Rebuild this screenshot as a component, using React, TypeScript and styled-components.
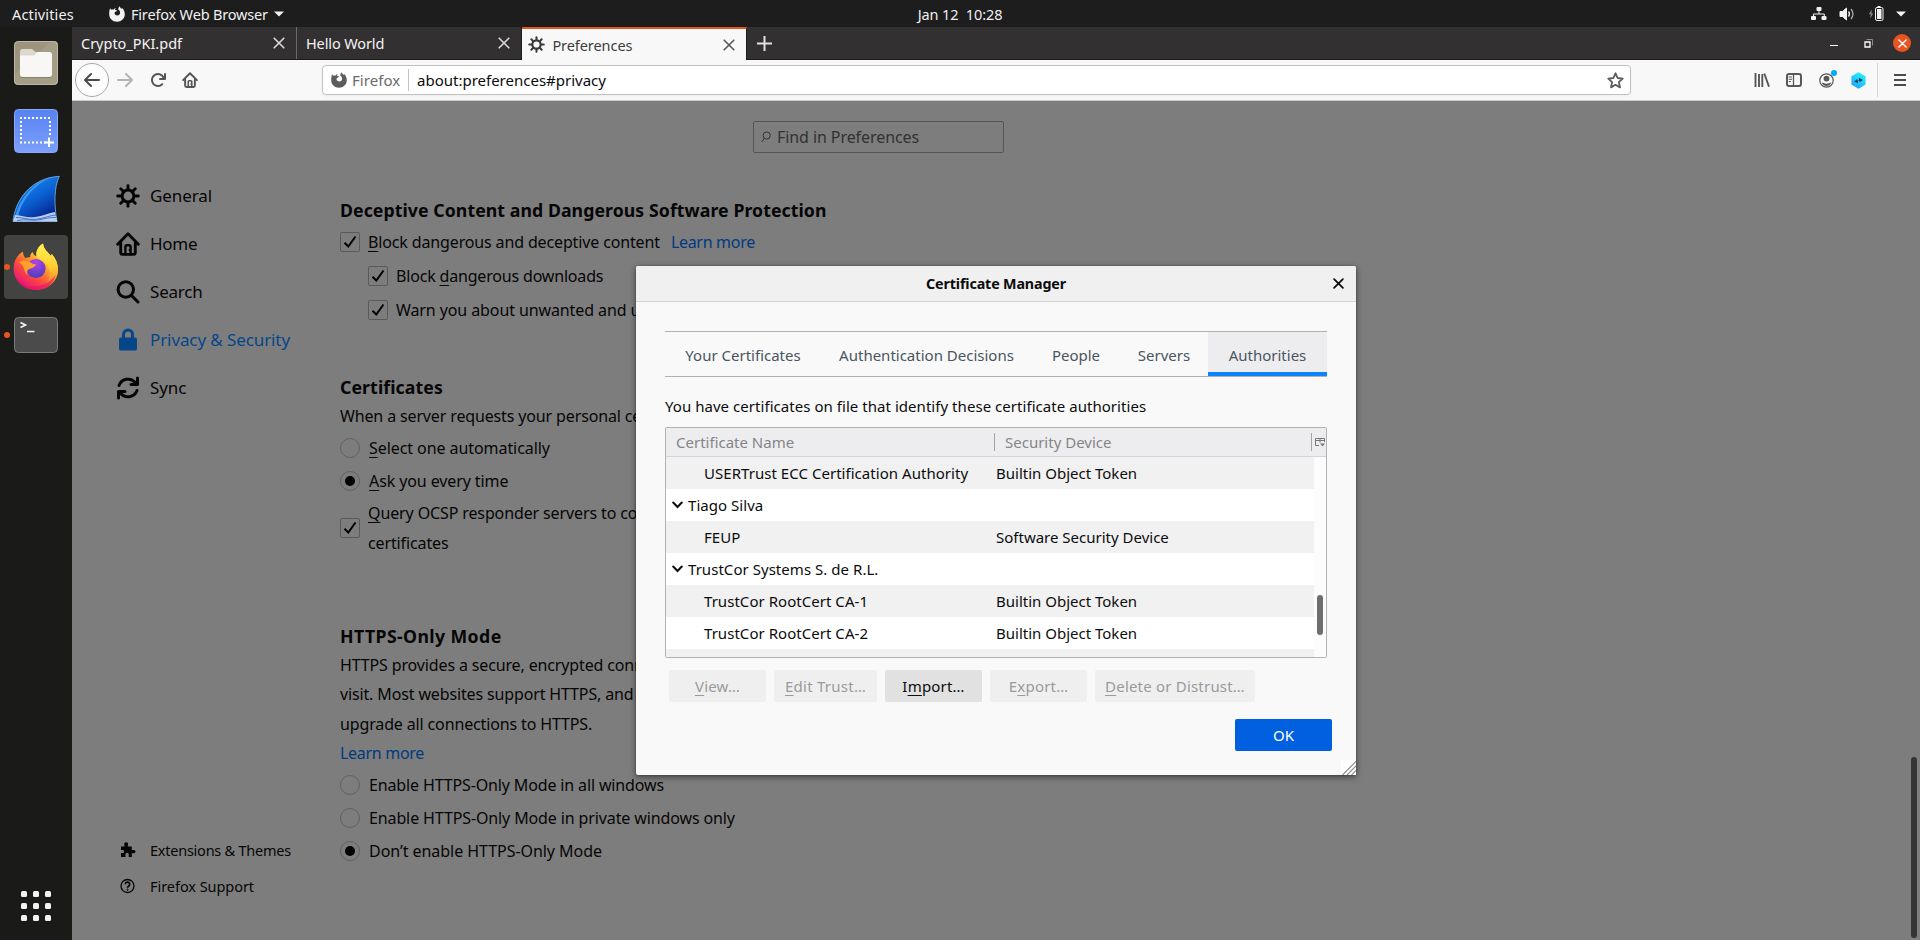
import React from 'react';
import styled, { createGlobalStyle, css } from 'styled-components';

const GlobalStyle = createGlobalStyle`
  *, *::before, *::after { box-sizing: border-box; }
  body { margin: 0; overflow: hidden; font-family: "Noto Sans", sans-serif; }
`;

/* ---------- shell ---------- */
const Desktop = styled.div`
  width: 1920px; height: 940px; display: flex; flex-direction: column;
  overflow: hidden; background: #1d1d1d; color: #060606; white-space: nowrap;
`;
const Row = styled.div`display: flex; flex: 1; min-height: 0;`;
const Text = styled.span<{ $ls?: number }>`letter-spacing: ${p => p.$ls ?? 0}px; white-space: pre;`;

const TopBar = styled.header`
  height: 27px; flex: none; display: grid; grid-template-columns: 1fr auto 1fr; align-items: center;
  background: #1d1d1d; color: #f0f0f0; font-size: 14.5px; line-height: 26px;
`;
const TopLeft = styled.div`display: flex; align-items: center; padding-left: 12px;`;
const AppMenu = styled.div`display: flex; align-items: center; margin-left: 35px; gap: 6px;`;
const Status = styled.div`display: flex; align-items: center; justify-content: flex-end; padding-right: 14px; gap: 12px;`;

/* ---------- dock ---------- */
const Dock = styled.nav`
  width: 72px; flex: none; background: #1a1a18; display: flex; flex-direction: column;
  align-items: center; padding: 2px 0 13px;
`;
const DockItem = styled.div<{ $active?: boolean; $running?: boolean }>`
  position: relative; width: 64px; height: 64px; margin: 2px 0; border-radius: 4px;
  display: flex; align-items: center; justify-content: center;
  background: ${p => (p.$active ? '#434342' : 'transparent')};
  ${p => p.$running && css`
    &::before {
      content: ''; position: absolute; left: 0; top: 29px; width: 6px; height: 6px;
      border-radius: 50%; background: #e95420;
    }`}
`;
const AppGrid = styled.div`
  margin-top: auto; margin-bottom: 6px; display: grid; grid-template-columns: repeat(3, 6px); gap: 6px;
  i { width: 6px; height: 6px; border-radius: 1.5px; background: #f2f2f0; }
`;

/* ---------- browser chrome ---------- */
const Browser = styled.div`flex: 1; display: flex; flex-direction: column; min-width: 0;`;
const TabStrip = styled.div`
  height: 33px; flex: none; display: flex; background: #333031; border-bottom: 1px solid #1c1b1c;
`;
const Tab = styled.div<{ $active?: boolean }>`
  width: 225px; display: flex; align-items: center; padding: 0 11px 0 ${p => (p.$active ? 6 : 9)}px;
  font-size: 14.5px; line-height: 32px; color: #f3f3f3; border-right: 1px solid #6c6a6b;
  & + & { border-right-color: #1c1b1c; }
  ${p => p.$active && css`
    width: 225px; height: 33px; background: #f8f8f8; color: #3d3d3e; border-top: 2px solid #e95420;
    line-height: 30px;`}
  > svg:last-child { margin-left: auto; }
`;
const NewTab = styled.div`width: 34px; display: grid; place-items: center;`;
const WindowButtons = styled.div`
  margin-left: auto; display: flex; align-items: center; gap: 0; padding-right: 1px;
  > * { width: 34px; display: grid; place-items: center; }
`;
const CloseWindow = styled.span`
  i { width: 18px; height: 18px; border-radius: 50%; background: #e95420; display: grid; place-items: center; }
`;
const Toolbar = styled.div`
  height: 41px; flex: none; display: flex; align-items: center; background: #f8f8f8;
  border-bottom: 1px solid #cccccc; padding-left: 3px;
`;
const BackButton = styled.div`
  width: 34px; height: 34px; border-radius: 50%; border: 1px solid #a9a9a9; background: #fdfdfd;
  display: grid; place-items: center;
`;
const ToolButton = styled.div<{ $w?: number }>`width: ${p => p.$w ?? 32}px; display: grid; place-items: center; position: relative;`;
const UrlBar = styled.div`
  width: 1309px; height: 30px; margin-left: 117px; border: 1px solid #c2c2c2; border-radius: 4px; background: #fff;
  display: flex; align-items: center; padding: 0 6px 0 8px; font-size: 15px; line-height: 28px; color: #0c0c0d;
  box-shadow: 0 1px 3px rgba(0, 0, 0, 0.05);
  > svg:last-child { margin-left: auto; }
`;
const Identity = styled.div`
  display: flex; align-items: center; gap: 5px; width: 78px; height: 22px; line-height: 22px; color: #6a6a6b;
  border-right: 1px solid #c4c4c4; margin-right: 8px;
`;
const ToolRight = styled.div`
  margin-left: auto; display: flex; align-items: center; padding-right: 1px;
`;
const ToolDivider = styled.div`width: 1px; height: 34px; background: #d7d7d7; margin: 0 3px 0 3px;`;
const Notice = styled.i`
  position: absolute; right: 5px; top: -3px; width: 6px; height: 6px; border-radius: 50%; background: #00a8f8;
`;

/* ---------- preferences page ---------- */
const Page = styled.div`flex: 1; min-height: 0; display: flex; background: #7d7d7d; position: relative;`;
const Nav = styled.aside`width: 268px; padding: 71px 0 36px 44px; display: flex; flex-direction: column;`;
const NavItem = styled.div<{ $selected?: boolean }>`
  height: 48px; display: flex; align-items: center; gap: 10px; font-size: 17px; line-height: 48px;
  color: ${p => (p.$selected ? '#05468a' : '#060606')};
`;
const NavFooter = styled.div`margin-top: auto;`;
const NavLink = styled.div`
  height: 36px; display: flex; align-items: center; gap: 14px; padding-left: 4px; font-size: 14.5px; line-height: 36px;
`;
const Pane = styled.main`width: 664px; padding-top: 20px; font-size: 16px;`;
const FindBox = styled.div`
  width: 251px; height: 32px; margin-left: 413px; border: 1px solid #555; border-radius: 2px; color: #323233;
  display: flex; align-items: center; gap: 6px; padding-left: 7px; line-height: 30px;
`;
const Section = styled.section<{ $top: number }>`padding-top: ${p => p.$top}px;`;
const Heading = styled.h2`margin: 0; height: 30px; line-height: 30px; font-size: 17.7px; font-weight: 700;`;
const Line = styled.div<{ $h: number }>`height: ${p => p.$h}px; line-height: ${p => p.$h}px;`;
const Option = styled.div<{ $h: number; $indent?: boolean; $gap?: number }>`
  height: ${p => p.$h}px; display: flex; align-items: center; gap: ${p => p.$gap ?? 8}px;
  line-height: 30px; padding-left: ${p => (p.$indent ? 28 : 0)}px;
`;
const Box = styled.span`
  width: 20px; height: 20px; flex: none; border: 1px solid #5a5a5a; border-radius: 2px; display: grid; place-items: center;
`;
const Radio = styled.span<{ $on?: boolean }>`
  width: 20px; height: 20px; flex: none; border: 1px solid #606060; border-radius: 50%; display: grid; place-items: center;
  ${p => p.$on && css`&::after { content: ''; width: 10px; height: 10px; border-radius: 50%; background: #000; }`}
`;
const Link = styled.a<{ $gap?: boolean }>`color: #003a80; letter-spacing: -0.3px; margin-left: ${p => (p.$gap ? 3 : 0)}px;`;
const Key = styled.u`
  text-decoration: underline; text-decoration-thickness: 1px; text-underline-offset: 3px; text-decoration-skip-ink: none;
`;
const PageThumb = styled.div`
  position: absolute; right: 3px; top: 656px; width: 6px; height: 181px; border-radius: 3px; background: #343434;
`;

/* ---------- dialog ---------- */
const Dialog = styled.div`
  position: absolute; left: 564px; top: 165px; width: 720px; height: 509px; background: #f9f9f9; border-radius: 2px;
  box-shadow: 0 2px 6px rgba(0, 0, 0, 0.5), 0 0 2px rgba(0, 0, 0, 0.3); color: #0c0c0d;
  font-size: 15px; display: flex; flex-direction: column;
`;
const DialogTitle = styled.div`
  height: 36px; flex: none; border-bottom: 1px solid #d2d2d4; background: #f0f0f0; border-radius: 2px 2px 0 0;
  display: grid; grid-template-columns: 36px 1fr 36px; align-items: center; text-align: center;
  font-weight: 700; font-size: 14.3px; line-height: 35px;
`;
const DialogBody = styled.div`padding: 29px 29px 0; display: flex; flex-direction: column;`;
const Tabs = styled.div`
  height: 46px; border-top: 1px solid #b1b1b3; border-bottom: 1px solid #b1b1b3; display: flex;
`;
const CertTab = styled.div<{ $w: number; $on?: boolean }>`
  width: ${p => p.$w}px; text-align: center; line-height: 46px; height: 44px; color: #4a5560;
  ${p => p.$on && css`background: #ededf0; border-bottom: 4px solid #0a84ff;`}
`;
const Description = styled.div`height: 50px; line-height: 58px;`;
const Tree = styled.div`
  height: 231px; border: 1px solid #b1b1b3; border-radius: 2px; background: #fff; display: flex; flex-direction: column;
`;
const TreeHead = styled.div`
  height: 29px; flex: none; display: flex; align-items: center; background: #ededef; color: #858587;
  border-bottom: 1px solid #d4d4d8; line-height: 28px;
`;
const HeadCell = styled.div<{ $w: number }>`
  width: ${p => p.$w}px; height: 18px; line-height: 18px; padding-left: 10px; border-right: 1px solid #a5a5a7;
`;
const ColumnPicker = styled.div`display: flex; padding-left: 3px;`;
const TreeBody = styled.div`flex: 1; min-height: 0; display: flex;`;
const TreeRows = styled.div`flex: 1; overflow: hidden;`;
const TreeRow = styled.div`
  height: 32px; display: grid; grid-template-columns: 330px 1fr; line-height: 32px;
  &:nth-child(odd) { background: #f1f1f1; }
`;
const NameCell = styled.div<{ $child?: boolean }>`
  display: flex; align-items: center; gap: 5px; padding-left: ${p => (p.$child ? 38 : 6)}px;
`;
const TreeScroll = styled.div`
  width: 12px; background: #fcfcfc; padding: 138px 3px 0;
  &::after { content: ''; display: block; width: 6px; height: 40px; border-radius: 3px; background: #6e6e6e; }
`;
const Buttons = styled.div`display: flex; gap: 8px; padding: 12px 4px 0;`;
const Button = styled.div<{ $w: number; $kind?: 'disabled' | 'primary' }>`
  width: ${p => p.$w}px; height: 32px; line-height: 32px; text-align: center; border-radius: 2px;
  background: #e1e1e2; color: #0c0c0d;
  ${p => p.$kind === 'disabled' && css`background: #efefef; color: #9a9a9b;`}
  ${p => p.$kind === 'primary' && css`background: #0060df; color: #fff;`}
`;
const DialogFooter = styled.div`display: flex; justify-content: flex-end; padding: 17px 24px 0;`;
const Resizer = styled.div`
  position: absolute; right: 0; bottom: 0; width: 15px; height: 15px; background: #fff; display: grid;
`;

/* ---------- icons ---------- */
const Gear = ({ s, c }: { s: number; c: string }) => (
  <svg width={s} height={s} viewBox="0 0 24 24" fill="none" stroke={c} strokeLinecap="round">
    <circle cx="12" cy="12" r="5.9" strokeWidth="3" />
    {[0, 45, 90, 135, 180, 225, 270, 315].map(a => (
      <path key={a} d="M12 5V1.7" strokeWidth="2.9" transform={`rotate(${a} 12 12)`} />
    ))}
  </svg>
);
const House = ({ s, c }: { s: number; c: string }) => (
  <svg width={s} height={s} viewBox="0 0 24 24" fill="none" stroke={c} strokeLinecap="round" strokeLinejoin="round">
    <path d="M1.7 12.2 12 1.8l10.3 10.4" strokeWidth="2.9" />
    <path d="M4.7 11v9.2a2.2 2.2 0 0 0 2.2 2.2h10.2a2.2 2.2 0 0 0 2.2-2.2V11" strokeWidth="2.9" />
    <path d="M9.4 22v-7.4a1.4 1.4 0 0 1 1.4-1.4h2.4a1.4 1.4 0 0 1 1.4 1.4V22" strokeWidth="2.4" />
    <path d="M13.4 17.8v.6" strokeWidth="1.5" />
  </svg>
);
const Cross = ({ s, c, w = 1.6 }: { s: number; c: string; w?: number }) => (
  <svg width={s} height={s} viewBox="0 0 10 10" stroke={c} strokeWidth={w} strokeLinecap="round">
    <path d="M1 1l8 8M9 1l-8 8" />
  </svg>
);
const FoxMark = ({ s, c }: { s: number; c: string }) => (
  <svg width={s} height={s} viewBox="0 0 16 16">
    <path
      fill={c}
      d="M1.1 2.2C1.5 3 2 3.5 2.6 3.8c.7-.3 1.3-.4 2-.3.5-.9 1.300-1.400 2.100-1.600-.5.6-.7 1.300-.6 1.900.5.4 1.200.5 2 .500-.2.9-.9 1.200-1.700 1.500-.8.5-1 1.200-.7 2 .4 1.100 1.300 1.700 2.500 1.700 1.700 0 2.900-1.200 2.900-2.800 0-1.400-.8-2.400-1.900-3.100C9.300 2.600 9.500 1.300 10.700.2c.2 1.200 1 1.900 2.100 2.700l.3-.9c1.700 1.500 2.700 3.700 2.700 6.200 0 4.200-3.400 7.500-7.800 7.500C3.600 15.700.2 12.400.2 8.200c0-2.300.2-4.400.9-6z"
    />
  </svg>
);
const Check = () => (
  <svg width="14" height="14" viewBox="0 0 14 14" fill="none" stroke="#000" strokeWidth="2">
    <path d="M1.500 7.700 5.300 11.500 12.500 1.500" />
  </svg>
);
const Arrow = ({ c, flip }: { c: string; flip?: boolean }) => (
  <svg width="16" height="16" viewBox="0 0 16 16" fill="none" stroke={c} strokeWidth="2" strokeLinecap="round" strokeLinejoin="round">
    {flip ? <path d="M1 8h14M9 2l6 6-6 6" /> : <path d="M15 8H1M7 2 1 8l6 6" />}
  </svg>
);
const Caret = () => <svg width="10" height="6" viewBox="0 0 10 6"><path d="M0 .5h10L5 5.500z" fill="#f2f2f2" /></svg>;
const Twisty = () => (
  <svg width="11" height="8" viewBox="0 0 11 8" fill="none" stroke="#0c0c0d" strokeWidth="2" strokeLinecap="round">
    <path d="M1.200 1.500 5.500 6l4.300-4.500" />
  </svg>
);

const FilesIcon = () => (
  <svg width="46" height="46" viewBox="0 0 46 46">
    <rect x="1" y="1" width="44" height="44" rx="4.500" fill="#9c947c" />
    <path d="M1 35 38 1h3a4 4 0 0 1 4 4v36a4 4 0 0 1-4 4H5a4 4 0 0 1-4-4z" fill="#aaa28c" opacity=".7" />
    <rect x="1.500" y="1.500" width="43" height="43" rx="4" fill="none" stroke="#bdb7a5" />
    <path d="M7 11.500A2.500 2.500 0 0 1 9.500 9h9c2 0 2.500 3 4.500 3h12v8H7z" fill="#dcd8cd" />
    <path d="M7 15.500h13.500c2 0 2.500-3.500 4.500-3.500h11.500a2.500 2.500 0 0 1 2.500 2.500V34a3 3 0 0 1-3 3H10a3 3 0 0 1-3-3z" fill="#f8f7f6" />
    <path d="M8 37.500h30" stroke="#878069" />
  </svg>
);
const ShotIcon = () => (
  <svg width="46" height="46" viewBox="0 0 46 46" fill="none">
    <defs><linearGradient id="shot" x1="0" y1="0" x2="0" y2="1"><stop stopColor="#5682f2" /><stop offset="1" stopColor="#7da0fb" /></linearGradient></defs>
    <rect x="1.500" y="1.500" width="43" height="43" rx="4" fill="url(#shot)" stroke="#8ba8f8" />
    <path d="M7 10h31M7 34.500h26M8 13v20M37 13v16" stroke="#fff" strokeWidth="2" strokeDasharray="2 2" />
    <path d="M36 29.500v9.500M31 34.500h10" stroke="#fff" strokeWidth="2" />
  </svg>
);
const SharkIcon = () => (
  <svg width="48" height="48" viewBox="0 0 48 48">
    <defs><linearGradient id="fin" x1=".2" y1="0" x2=".8" y2="1"><stop stopColor="#1a90f8" /><stop offset=".5" stopColor="#0a5fd0" /><stop offset="1" stopColor="#04167e" /></linearGradient></defs>
    <path d="M1 46.500C3 26 18 3 47.300 1.300 42 12 42 30 45 46.500z" fill="url(#fin)" stroke="#78b5ee" strokeWidth=".8" />
    <path d="M2.500 44C6 27 20 7 38 3.200 22 9 8 28 6.500 41z" fill="#55b2fb" opacity=".65" />
    <path d="M1 46.500 3 40c7 .5 12 3 20 2s14-4 20-5l2.300 9.500z" fill="#b8cef0" />
    <path d="M4 42.500c8 0 14 3 22 1.500s12-3.500 18-4M5 45.500c9-2 16 1 24-1s9-2 15-2" stroke="#4674c8" fill="none" />
  </svg>
);
const FirefoxIcon = () => (
  <svg width="46" height="48" viewBox="0 0 46 48">
    <defs>
      <linearGradient id="fire" x1=".85" y1=".1" x2=".2" y2=".95"><stop stopColor="#fff14a" /><stop offset=".35" stopColor="#ffb02c" /><stop offset=".65" stopColor="#ff4e3c" /><stop offset="1" stopColor="#e3107c" /></linearGradient>
      <linearGradient id="flame" x1=".5" y1="0" x2=".6" y2="1"><stop stopColor="#fff24a" /><stop offset=".55" stopColor="#ffcf32" /><stop offset="1" stopColor="#ff8a2b" stopOpacity="0.300" /></linearGradient>
      <radialGradient id="globe" cx=".5" cy=".2" r=".8"><stop stopColor="#b540ee" /><stop offset="1" stopColor="#4a3fb8" /></radialGradient>
    </defs>
    <path d="M10 8.500c0 3 1 5 2.500 6.500 1.500-.7 3-1 4.500-.8 0-2 1-4 2.600-5.200C21 12 22 13 23.500 13c-1-5 2-10 6.500-12.500.5 6 5.500 9 8 12.500l.8-2c4.200 5 6.200 10 6.200 15.500C45 38.500 35 47 23 47S.6 38 .6 25.500C.6 18 4 12 10 8.500z" fill="url(#fire)" />
    <path d="M30 .5c.5 6 5.500 9 8 12.500l.8-2c4.200 5 6.200 10 6.200 15.500C45 36 39 42 31 43c6-5 8-14 3-21-3-4-10-6-10.500-9-.500-5 2-10 6.500-12.500z" fill="url(#flame)" />
    <circle cx="23" cy="25.500" r="9.600" fill="url(#globe)" />
    <path d="M6 19.500c4-3 10-2 14 1.500l3 .3c-1 3-4.500 4-6.500 4.700-2.500.8-3 3-2 6C10 28 12 22 6 19.500z" fill="#ffa02a" />
    <path d="M2.500 34C8 43 19 45 29 42c6-2 11-6 14-10-3 9-10 15-20 15-9 0-17-5-20.500-13z" fill="#e80d6c" opacity=".6" />
  </svg>
);
const TerminalIcon = () => (
  <svg width="46" height="38" viewBox="0 0 46 38" fill="none">
    <rect x="1.500" y="1.500" width="43" height="35" rx="4" fill="#4b4b4b" stroke="#7c7c7c" />
    <path d="M7.500 6.500 12.500 9l-5 2.500M14 15.500h7.500" stroke="#f4f4f4" strokeWidth="1.700" />
  </svg>
);

const rows: [string, string, boolean][] = [
  ['USERTrust ECC Certification Authority', 'Builtin Object Token', true],
  ['Tiago Silva', '', false],
  ['FEUP', 'Software Security Device', true],
  ['TrustCor Systems S. de R.L.', '', false],
  ['TrustCor RootCert CA-1', 'Builtin Object Token', true],
  ['TrustCor RootCert CA-2', 'Builtin Object Token', true],
  ['', '', true],
];

export default function App() {
  return (
    <Desktop>
      <GlobalStyle />
      <TopBar>
        <TopLeft>
          <Text $ls={0.15}>Activities</Text>
          <AppMenu>
            <FoxMark s={16} c="#f2f2f2" />
            <Text $ls={-0.17}>Firefox Web Browser</Text>
            <Caret />
          </AppMenu>
        </TopLeft>
        <Text $ls={-0.1}>Jan 12  10:28</Text>
        <Status>
          <svg width="16" height="14" viewBox="0 0 16 14" fill="#f2f2f2">
            <rect x="5.500" width="5" height="4" rx="1" /><rect y="9" width="5" height="4" rx="1" /><rect x="10.500" y="9" width="5" height="4" rx="1" />
            <path d="M8 3v4M2.500 9.500V7h10.800v2.500" fill="none" stroke="#f2f2f2" />
          </svg>
          <svg width="17" height="14" viewBox="0 0 17 14" fill="none" stroke="#aaa" strokeWidth="1.300">
            <path d="M1 4.500h2.500L7.500 1v12L3.500 9.500H1z" fill="#f2f2f2" stroke="#f2f2f2" strokeWidth="1" />
            <path d="M9.500 4.500q2 2.500 0 5" stroke="#f2f2f2" /><path d="M12 2q4 5 0 10" />
          </svg>
          <svg width="16" height="16" viewBox="0 0 16 16">
            <path d="M3.800 3.500.8 8.300h2L2.200 12.500l3-5H3.500z" fill="#888" />
            <path d="M9.500 0h3v1.500h-3z" fill="#f2f2f2" /><rect x="7.500" y="1.500" width="7.500" height="13" rx="1.500" fill="none" stroke="#f2f2f2" />
            <rect x="9" y="3" width="4.500" height="10" fill="#f2f2f2" />
          </svg>
          <Caret />
        </Status>
      </TopBar>
      <Row>
        <Dock>
          <DockItem><FilesIcon /></DockItem>
          <DockItem><ShotIcon /></DockItem>
          <DockItem><SharkIcon /></DockItem>
          <DockItem $active $running><FirefoxIcon /></DockItem>
          <DockItem $running><TerminalIcon /></DockItem>
          <AppGrid>{Array.from({ length: 9 }, (_, i) => <i key={i} />)}</AppGrid>
        </Dock>
        <Browser>
          <TabStrip>
            <Tab><Text $ls={-0.02}>Crypto_PKI.pdf</Text><Cross s={12} c="#dcdcdc" w={1.3} /></Tab>
            <Tab><Text $ls={-0.12}>Hello World</Text><Cross s={12} c="#dcdcdc" w={1.3} /></Tab>
            <Tab $active>
              <Gear s={17} c="#39393a" /><Text $ls={-0.07}>{'  '}Preferences</Text><Cross s={12} c="#555" w={1.3} />
            </Tab>
            <NewTab>
              <svg width="15" height="15" viewBox="0 0 15 15" stroke="#e2e2e2" strokeWidth="2"><path d="M7.500 0v15M0 7.500h15" /></svg>
            </NewTab>
            <WindowButtons>
              <span><svg width="8" height="8" viewBox="0 0 8 8"><path d="M0 6h8v1H0z" fill="#fff" /></svg></span>
              <span>
                <svg width="9" height="9" viewBox="0 0 9 9" fill="none">
                  <path d="M2.500.5h6v6" stroke="#8d8b8c" /><path d="M1 3h5v5H1z" stroke="#fff" strokeWidth="1.300" />
                </svg>
              </span>
              <CloseWindow><i><Cross s={9} c="#fff" w={1.6} /></i></CloseWindow>
            </WindowButtons>
          </TabStrip>
          <Toolbar>
            <BackButton><Arrow c="#4b4b4c" /></BackButton>
            <ToolButton><Arrow c="#b4b4b5" flip /></ToolButton>
            <ToolButton $w={33}>
              <svg width="16" height="16" viewBox="0 0 16 16" fill="#555">
                <path d="M15 1a1 1 0 0 0-1 1v2.418A6.995 6.995 0 1 0 8 15a6.954 6.954 0 0 0 4.950-2.050 1 1 0 0 0-1.414-1.414A5.019 5.019 0 1 1 12.549 6H10a1 1 0 0 0 0 2h5a1 1 0 0 0 1-1V2a1 1 0 0 0-1-1z" />
              </svg>
            </ToolButton>
            <ToolButton $w={31}><House s={16} c="#555" /></ToolButton>
            <UrlBar>
              <Identity><FoxMark s={16} c="#5d5d5e" /><Text $ls={0.05}>Firefox</Text></Identity>
              <Text>about:preferences#privacy</Text>
              <svg width="17" height="17" viewBox="0 0 17 17" fill="none" stroke="#5b5b5c" strokeWidth="1.800" strokeLinejoin="round">
                <path d="m8.500 1.300 2.100 4.700 5.100.6-3.800 3.500 1.100 5.300-4.500-2.600L4 15.400l1.100-5.300L1.300 6.600 6.400 6z" />
              </svg>
            </UrlBar>
            <ToolRight>
              <ToolButton>
                <svg width="16" height="16" viewBox="0 0 16 16" stroke="#58585a" strokeWidth="1.900"><path d="M1.500 1v14M5 2v13M8.300 2v13M10.300 1.500l4.700 13.200" /></svg>
              </ToolButton>
              <ToolButton>
                <svg width="16" height="14" viewBox="0 0 16 14" fill="none" stroke="#58585a" strokeWidth="2">
                  <rect x="1" y="1" width="14" height="12" rx="2" /><path d="M7.500 1v12" strokeWidth="1.300" /><path d="M2.700 4h3.300M2.700 6.300h3.300M2.700 8.600h2.300" strokeWidth="1" />
                </svg>
              </ToolButton>
              <ToolButton>
                <svg width="15" height="15" viewBox="0 0 15 15" fill="#58585a">
                  <circle cx="7.500" cy="7.500" r="6.700" fill="none" stroke="#58585a" strokeWidth="1.200" /><circle cx="7.500" cy="5.600" r="2.900" />
                  <path d="M2.700 9.500c1.500 0 2.500 1.200 4.800 1.200s3.300-1.200 4.800-1.200c-.8 2.200-2.600 3.600-4.800 3.600s-4-1.400-4.800-3.600z" />
                </svg>
                <Notice />
              </ToolButton>
              <ToolButton>
                <svg width="15" height="17" viewBox="0 0 15 17">
                  <defs><linearGradient id="hex" x1=".2" y1="1" x2=".8" y2="0"><stop stopColor="#1c9dff" /><stop offset=".6" stopColor="#1fd8ff" /><stop offset="1" stopColor="#28f0f5" /></linearGradient></defs>
                  <path d="M7.500.3 14.600 4.300v8.300L7.500 16.700.4 12.600V4.300z" fill="url(#hex)" />
                  <path d="M3 9.500 6.300 7v1.400h1.600V5.700L12 8 8.700 10.300V9H7v2.300z" fill="#24415a" />
                </svg>
              </ToolButton>
              <ToolDivider />
              <ToolButton $w={38}>
                <svg width="12" height="12" viewBox="0 0 12 12" stroke="#4b4b4c" strokeWidth="2"><path d="M0 1h12M0 6h12M0 11h12" /></svg>
              </ToolButton>
            </ToolRight>
          </Toolbar>

          <Page>
            <Nav>
              <NavItem><Gear s={24} c="#050505" /><Text $ls={-0.1}>General</Text></NavItem>
              <NavItem><House s={24} c="#050505" /><Text $ls={-0.3}>Home</Text></NavItem>
              <NavItem>
                <svg width="24" height="24" viewBox="0 0 24 24" fill="none" stroke="#050505" strokeWidth="3" strokeLinecap="round"><circle cx="9.800" cy="9.500" r="7.700" /><path d="m15.500 15.500 6.500 6.500" /></svg>
                <Text $ls={-0.2}>Search</Text>
              </NavItem>
              <NavItem $selected>
                <svg width="24" height="24" viewBox="0 0 24 24"><path d="M7.500 11V6.500a4.500 4.500 0 0 1 9 0V11" fill="none" stroke="#05468a" strokeWidth="3" /><rect x="3" y="9.500" width="18" height="13" rx="2" fill="#05468a" /></svg>
                <Text $ls={-0.1}>Privacy &amp; Security</Text>
              </NavItem>
              <NavItem>
                <svg width="24" height="24" viewBox="0 0 24 24" fill="none" stroke="#050505" strokeWidth="3" strokeLinecap="round" strokeLinejoin="round">
                  <path d="M3 9.500A9.500 9.500 0 0 1 19.500 7M21.500 2v6.500H15M21 14.500A9.500 9.500 0 0 1 4.500 17M2.500 22v-6.500H9" />
                </svg>
                <Text $ls={-0.1}>Sync</Text>
              </NavItem>
              <NavFooter>
                <NavLink>
                  <svg width="16" height="16" viewBox="0 0 16 16" fill="#050505">
                    <path d="M1 4.500h3.500V3a1.900 1.900 0 1 1 3.300 0v1.500h4V8h1.400a1.700 1.700 0 1 1 0 3.200h-1.400v3.900H8.700V13a1.700 1.700 0 1 0-3.200 0v2.100H1V11h1.800a1.500 1.500 0 1 0 0-3H1z" />
                  </svg>
                  <Text $ls={-0.24}>Extensions &amp; Themes</Text>
                </NavLink>
                <NavLink>
                  <svg width="16" height="16" viewBox="0 0 16 16" fill="none" stroke="#050505">
                    <circle cx="7.500" cy="8" r="6.500" strokeWidth="1.300" /><path d="M5.300 6.300a2.200 2.200 0 1 1 3.300 1.900c-.8.5-1.100.8-1.100 1.600" strokeWidth="1.700" /><circle cx="7.500" cy="11.700" r=".6" />
                  </svg>
                  <Text $ls={-0.05}>Firefox Support</Text>
                </NavLink>
              </NavFooter>
            </Nav>

            <Pane>
              <FindBox>
                <svg width="10" height="13" viewBox="0 0 10 13" fill="none" stroke="#333" strokeWidth="1"><circle cx="5.700" cy="4.500" r="3.600" /><path d="M3.300 7.300.8 11" /></svg>
                <Text $ls={-0.08}>Find in Preferences</Text>
              </FindBox>
              <Section $top={42}>
                <Heading><Text $ls={0.07}>Deceptive Content and Dangerous Software Protection</Text></Heading>
                <Option $h={34}>
                  <Box><Check /></Box><Text $ls={-0.14}><Key>B</Key>lock dangerous and deceptive content</Text><Link $gap>Learn more</Link>
                </Option>
                <Option $h={34} $indent><Box><Check /></Box><Text $ls={-0.18}>Block <Key>d</Key>angerous downloads</Text></Option>
                <Option $h={34} $indent><Box><Check /></Box><Text $ls={-0.1}>Warn you about unwanted and uncommon software</Text></Option>
              </Section>
              <Section $top={45}>
                <Heading><Text $ls={0.1}>Certificates</Text></Heading>
                <Line $h={29}><Text $ls={-0.14}>When a server requests your personal certificate</Text></Line>
                <Option $h={33} $gap={9}><Radio /><Text $ls={-0.07}><Key>S</Key>elect one automatically</Text></Option>
                <Option $h={33} $gap={9}><Radio $on /><Text $ls={-0.1}><Key>A</Key>sk you every time</Text></Option>
                <Option $h={62}>
                  <Box><Check /></Box>
                  <Text $ls={-0.12}><Key>Q</Key>uery OCSP responder servers to confirm the current validity of{'\n'}certificates</Text>
                </Option>
              </Section>
              <Section $top={62}>
                <Heading><Text $ls={0.4}>HTTPS-Only Mode</Text></Heading>
                <Line $h={29.33}><Text $ls={-0.14}>HTTPS provides a secure, encrypted connection between Firefox and the websites you</Text></Line>
                <Line $h={29.33}><Text $ls={-0.14}>visit. Most websites support HTTPS, and when enabled, Firefox will</Text></Line>
                <Line $h={29.33}><Text $ls={-0.14}>upgrade all connections to HTTPS.</Text></Line>
                <Line $h={29.33}><Link>Learn more</Link></Line>
                <Option $h={33} $gap={9}><Radio /><Text $ls={-0.14}>Enable HTTPS-Only Mode in all windows</Text></Option>
                <Option $h={33} $gap={9}><Radio /><Text $ls={-0.12}>Enable HTTPS-Only Mode in private windows only</Text></Option>
                <Option $h={33} $gap={9}><Radio $on /><Text $ls={-0.05}>Don’t enable HTTPS-Only Mode</Text></Option>
              </Section>
            </Pane>
            <PageThumb />

            <Dialog>
              <DialogTitle>
                <span /><Text $ls={-0.15}>Certificate Manager</Text><span><Cross s={11} c="#0c0c0d" w={1.6} /></span>
              </DialogTitle>
              <DialogBody>
                <Tabs>
                  <CertTab $w={156}><Text>Your Certificates</Text></CertTab>
                  <CertTab $w={211}><Text>Authentication Decisions</Text></CertTab>
                  <CertTab $w={88}><Text>People</Text></CertTab>
                  <CertTab $w={88}><Text>Servers</Text></CertTab>
                  <CertTab $w={119} $on><Text>Authorities</Text></CertTab>
                </Tabs>
                <Description><Text $ls={0.045}>You have certificates on file that identify these certificate authorities</Text></Description>
                <Tree>
                  <TreeHead>
                    <HeadCell $w={329}><Text>Certificate Name</Text></HeadCell>
                    <HeadCell $w={317}><Text>Security Device</Text></HeadCell>
                    <ColumnPicker>
                      <svg width="10" height="10" viewBox="0 0 10 10" fill="none" stroke="#77777a">
                        <path d="M4 8.500H.5v-7h9V5M.5 3.500h9M5 1.500v4" /><path d="M5 6.500h5L7.500 9.500z" fill="#77777a" stroke="none" />
                      </svg>
                    </ColumnPicker>
                  </TreeHead>
                  <TreeBody>
                    <TreeRows>
                      {rows.map(([name, device, child], i) => (
                        <TreeRow key={i}>
                          <NameCell $child={child}>{!child && <Twisty />}<Text $ls={0.04}>{name}</Text></NameCell>
                          <Text>{device}</Text>
                        </TreeRow>
                      ))}
                    </TreeRows>
                    <TreeScroll />
                  </TreeBody>
                </Tree>
                <Buttons>
                  <Button $w={97} $kind="disabled"><Text $ls={0.2}><Key>V</Key>iew…</Text></Button>
                  <Button $w={103} $kind="disabled"><Text $ls={0.25}><Key>E</Key>dit Trust…</Text></Button>
                  <Button $w={97}><Text $ls={0.2}>I<Key>m</Key>port…</Text></Button>
                  <Button $w={97} $kind="disabled"><Text $ls={0.2}>E<Key>x</Key>port…</Text></Button>
                  <Button $w={160} $kind="disabled"><Text $ls={0.2}><Key>D</Key>elete or Distrust…</Text></Button>
                </Buttons>
              </DialogBody>
              <DialogFooter><Button $w={97} $kind="primary"><Text>OK</Text></Button></DialogFooter>
              <Resizer>
                <svg width="15" height="15" viewBox="0 0 15 15" stroke="#8f8f8f" strokeWidth="1.200"><path d="M1.500 15 15 1.500M6 15l9-9M10.500 15l4.500-4.500" /></svg>
              </Resizer>
            </Dialog>
          </Page>
        </Browser>
      </Row>
    </Desktop>
  );
}
